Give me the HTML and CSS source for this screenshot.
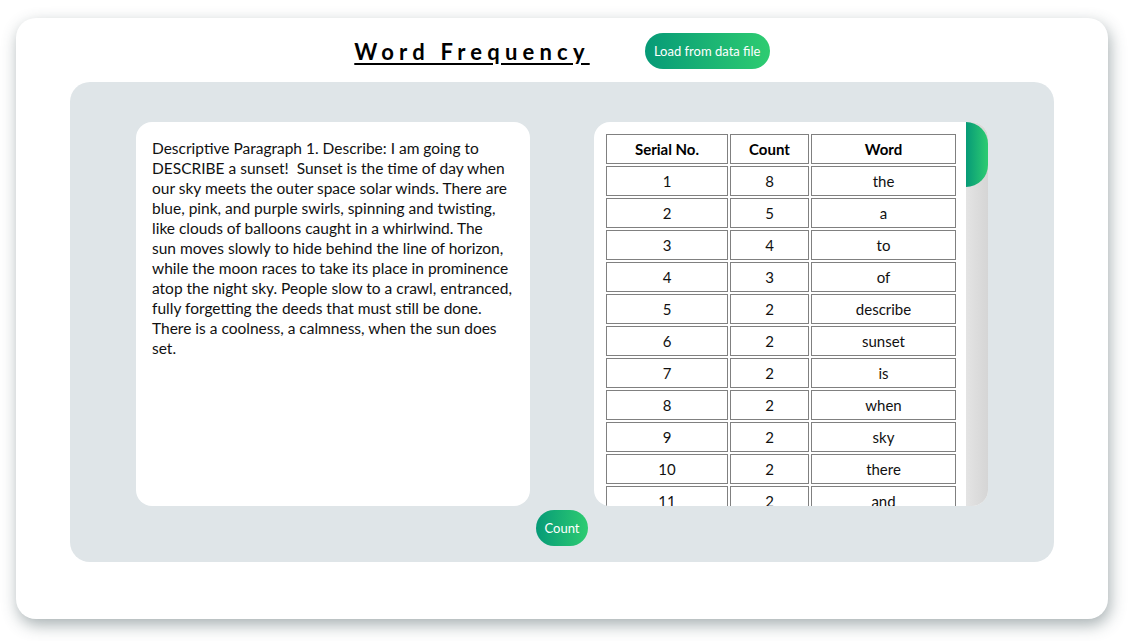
FILE: index.html
```html
<!DOCTYPE html>
<html>
<head>
<meta charset="utf-8">
<title>Word Frequency</title>
<link rel="stylesheet" href="styles.css">
</head>
<body>
<div class="card">
  <header class="header">
    <h1 class="title">Word Frequency</h1>
    <button class="btn btn-load">Load from data file</button>
  </header>
  <main class="panel">
    <div class="boxes">
      <div class="box text-box">Descriptive Paragraph 1. Describe: I am going to DESCRIBE a sunset!&nbsp; Sunset is the time of day when our sky meets the outer space solar winds. There are blue, pink, and purple swirls, spinning and twisting, like clouds of balloons caught in a whirlwind. The sun&nbsp;moves slowly to hide behind the line of horizon, while the moon races to take its place in prominence atop the night sky. People slow to a crawl, entranced, fully forgetting the deeds that must still be done. There is a coolness, a calmness, when the sun does set.</div>
      <div class="box table-box">
        <div class="table-scroll">
        <table class="freq">
          <thead><tr><th class="c1">Serial No.</th><th class="c2">Count</th><th class="c3">Word</th></tr></thead>
          <tbody>
<tr><td>1</td><td>8</td><td>the</td></tr>
<tr><td>2</td><td>5</td><td>a</td></tr>
<tr><td>3</td><td>4</td><td>to</td></tr>
<tr><td>4</td><td>3</td><td>of</td></tr>
<tr><td>5</td><td>2</td><td>describe</td></tr>
<tr><td>6</td><td>2</td><td>sunset</td></tr>
<tr><td>7</td><td>2</td><td>is</td></tr>
<tr><td>8</td><td>2</td><td>when</td></tr>
<tr><td>9</td><td>2</td><td>sky</td></tr>
<tr><td>10</td><td>2</td><td>there</td></tr>
<tr><td>11</td><td>2</td><td>and</td></tr>
          </tbody>
        </table>
        </div>
        <div class="scrollbar" aria-hidden="true"><div class="thumb"></div></div>
      </div>
    </div>
    <button class="btn btn-count">Count</button>
  </main>
</div>
</body>
</html>
```

FILE: styles.css
```css
* { box-sizing: border-box; }
html, body { margin: 0; background: #ffffff; }
body {
  padding: 18px 25px 22px 16px;
  font-family: Lato, "Noto Sans", sans-serif;
  color: #111;
}
.card {
  height: 601px;
  background: #fff;
  border-radius: 20px;
  box-shadow: 2px 6px 16px rgba(60, 80, 85, 0.45);
  display: flex;
  flex-direction: column;
  align-items: center;
  padding-top: 15px;
}
.header {
  display: flex;
  align-items: center;
  justify-content: center;
  gap: 55px;
  height: 36px;
}
.title {
  margin: 0;
  font-size: 22px;
  font-weight: 700;
  letter-spacing: 5.2px;
  text-decoration: underline;
  text-underline-offset: 3px;
  color: #000;
}
.btn {
  border: none;
  color: #fff;
  font-family: inherit;
  font-size: 13px;
  background: linear-gradient(to right, #069a77, #2ecc71);
  border-radius: 18px;
  height: 36px;
  padding: 0 10px;
  cursor: pointer;
}
.btn-load { width: 125px; padding: 0; }
.panel {
  margin-top: 13px;
  width: 984px;
  height: 480px;
  background: #dfe5e8;
  border-radius: 20px;
  padding-top: 40px;
  display: flex;
  flex-direction: column;
  align-items: center;
}
.boxes {
  display: flex;
  gap: 64px;
}
.box {
  width: 394px;
  height: 384px;
  background: #fff;
  border-radius: 16px;
}
.text-box {
  padding: 16px 15px 16px 16px;
  font-size: 15.5px;
  line-height: 20px;
  color: #111;
}
.table-box {
  display: flex;
  overflow: hidden;
}
.table-scroll {
  flex: 1;
  overflow: hidden;
  padding: 10px 0 0 10px;
}
.scrollbar {
  width: 22px;
  height: 100%;
  background: linear-gradient(to right, #e4e4e4, #d5d5d5);
}
.thumb {
  height: 65px;
  background: linear-gradient(to right, #069a77, #2ecc71);
  border-radius: 0 22px 22px 0;
}
.freq {
  border-spacing: 2px;
  width: 354px;
  table-layout: fixed;
  font-size: 15px;
}
.freq th, .freq td {
  border: 1px solid #808080;
  height: 30px;
  padding: 0;
  text-align: center;
  color: #111;
}
.freq th { font-weight: 700; color: #000; }
.c1 { width: 122px; }
.c2 { width: 79px; }
.c3 { width: 145px; }
.btn-count {
  margin-top: 4px;
  width: 52px;
  padding: 0;
}
```
